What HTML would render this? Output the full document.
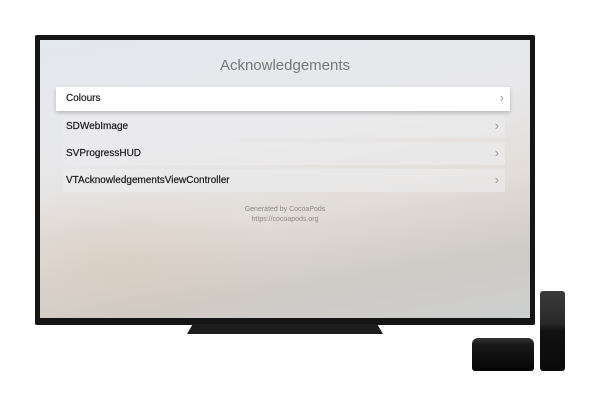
<!DOCTYPE html>
<html><head><style>
body{margin:0;width:600px;height:406px;background:#fff;position:relative;overflow:hidden;font-family:"Liberation Sans",sans-serif}
.frame{position:absolute;left:35px;top:35px;width:500px;height:290px;background:#151515;border-radius:2px}
.screen{position:absolute;left:40px;top:40px;width:490px;height:278px;background:linear-gradient(170deg,#e4e8ef 0%,#e8e8ea 35%,#e2ddd8 60%,#cfcbc6 80%,#cdcfd0 100%);overflow:hidden}
.screen:after{content:"";position:absolute;left:0;top:150px;width:260px;height:130px;background:radial-gradient(ellipse at 30% 60%,rgba(215,200,185,.6),rgba(215,200,185,0) 70%)}
.title{position:absolute;left:0;width:490px;top:17px;text-align:center;color:#777;font-size:15px}
.row{position:absolute;left:23px;width:442px;height:23px;background:rgba(235,235,237,.7);font-size:10px;color:#1a1a1a;line-height:23px;padding-left:3px;box-sizing:border-box;-webkit-text-stroke:0.2px #1a1a1a}
.row span{position:absolute;right:6px;top:-1px;color:#999;font-size:13px;-webkit-text-stroke:0}
.sel{left:16px;width:454px;height:24px;background:#fff;box-shadow:0 2px 4px rgba(0,0,0,.2);padding-left:10px;z-index:2}
.foot{position:absolute;left:0;width:490px;top:165px;text-align:center;color:#8a8a8a;font-size:7px;line-height:9.5px;z-index:2}
.stand{position:absolute;left:187px;top:324px;width:196px;height:10px;background:#1c1c1c;clip-path:polygon(3% 0,97% 0,100% 100%,0 100%)}
.box{position:absolute;left:472px;top:338px;width:62px;height:33px;background:linear-gradient(#333 0,#1a1a1a 20%,#050505 100%);border-radius:6px 6px 3px 3px}
.remote{position:absolute;left:540px;top:291px;width:25px;height:80px;background:linear-gradient(#3a3a3a 0,#2a2a2a 40%,#111 50%,#0a0a0a);border-radius:3px}
</style></head><body>
<div class="frame"></div>
<div class="screen">
<div class="title">Acknowledgements</div>
<div class="row sel" style="top:47px;line-height:24px">Colours<span>›</span></div>
<div class="row" style="top:75px">SDWebImage<span>›</span></div>
<div class="row" style="top:102px">SVProgressHUD<span>›</span></div>
<div class="row" style="top:129px">VTAcknowledgementsViewController<span>›</span></div>
<div class="foot">Generated by CocoaPods<br>https://cocoapods.org</div>
</div>
<div class="stand"></div>
<div class="box"></div>
<div class="remote"></div>
</body></html>
